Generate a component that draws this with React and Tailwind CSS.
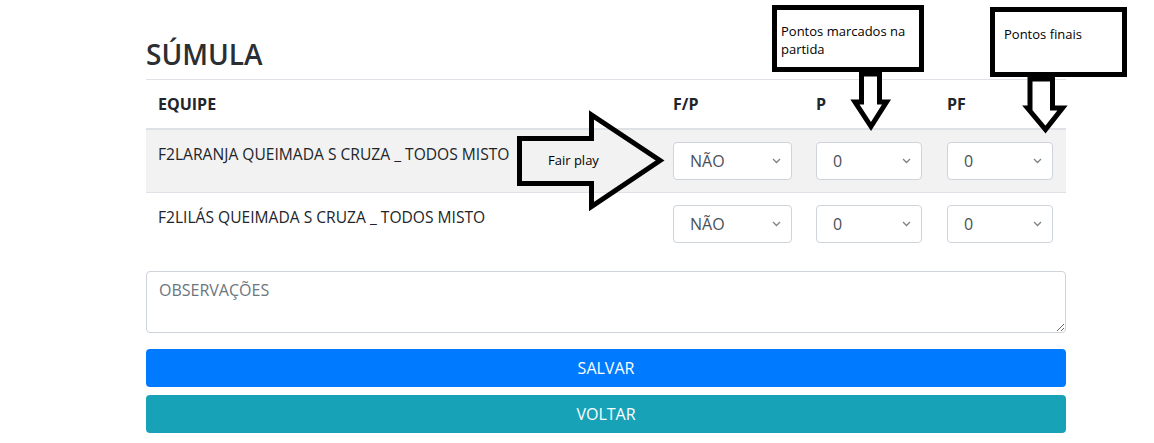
import React from 'react';

const Chevron = () => (
  <svg className="absolute right-[10px] top-1/2 -translate-y-1/2" width="9" height="6" viewBox="0 0 9 6" fill="none">
    <path d="M1 1l3.5 3.5L8 1" stroke="#7b8288" strokeWidth="1.3" />
  </svg>
);

const Select = ({ value, width }) => (
  <div className={`relative h-[38px] ${width} rounded-[4px] border border-[#ced4da] bg-white`}>
    <span className="absolute left-[16px] top-1/2 -translate-y-1/2 text-[16px] leading-6 text-[#495057]">{value}</span>
    <Chevron />
  </div>
);

const rows = [
  { name: 'F2LARANJA QUEIMADA S CRUZA _ TODOS MISTO', striped: true },
  { name: 'F2LILÁS QUEIMADA S CRUZA _ TODOS MISTO', striped: false },
];

const Annotations = () => (
  <div className="pointer-events-none absolute inset-0">
    <svg className="absolute left-0 top-0" width="1154" height="443">
      {/* fair play arrow */}
      <polygon
        points="519.5,138.5 591.5,138.5 591.5,115 660,160.5 591.5,206.5 591.5,183.5 519.5,183.5"
        fill="none"
        stroke="#000"
        strokeWidth="5"
        strokeLinejoin="miter"
      />
      {/* callout boxes */}
      <rect x="774.5" y="7.5" width="147" height="62" fill="#fff" stroke="#000" strokeWidth="5" />
      <rect x="992.5" y="9.5" width="132" height="65" fill="#fff" stroke="#000" strokeWidth="5" />
      {/* down arrows */}
      <polygon
        points="861.5,74 879.5,74 879.5,102 886.5,102 871,126.5 855,102 861.5,102"
        fill="#fff"
        stroke="#000"
        strokeWidth="5"
      />
      <polygon
        points="1030,79 1052.5,79 1052.5,108 1062.5,108 1045.5,129.5 1027.5,108 1030,108"
        fill="#fff"
        stroke="#000"
        strokeWidth="5"
      />
    </svg>
    <span className="absolute left-[548px] top-[151px] text-[13px] leading-[18px] text-black">Fair play</span>
    <span className="absolute left-[781px] top-[22px] w-[138px] text-[13px] leading-[18px] text-black">
      Pontos marcados na partida
    </span>
    <span className="absolute left-[1004px] top-[25px] text-[13px] leading-[18px] text-black">Pontos finais</span>
  </div>
);

export default function App() {
  return (
    <div className="relative h-[443px] w-[1154px] overflow-hidden bg-white font-['Open_Sans',sans-serif] text-[#212529]">
      <div className="ml-[146px] w-[920px] pt-[36px]">
        <h2 className="mb-[7px] text-[28px] font-semibold leading-[36px] text-[#2b2f33]">SÚMULA</h2>

        <div className="mb-[16px]">
          <div className="grid grid-cols-[515px_143px_131px_131px] border-b-2 border-t border-[#dee2e6] text-[16px] font-bold leading-6">
            <div className="p-3">EQUIPE</div>
            <div className="p-3">F/P</div>
            <div className="p-3">P</div>
            <div className="p-3">PF</div>
          </div>
          {rows.map((r, i) => (
            <div
              key={i}
              className={`grid grid-cols-[515px_143px_131px_131px] ${i > 0 ? 'border-t' : ''} border-[#dee2e6] ${r.striped ? 'bg-[#f2f2f2]' : 'bg-white'}`}
            >
              <div className="px-3 py-3 text-[15.6px] leading-6">{r.name}</div>
              <div className="p-3"><Select value="NÃO" width="w-[119px]" /></div>
              <div className="p-3"><Select value="0" width="w-[106px]" /></div>
              <div className="p-3"><Select value="0" width="w-[106px]" /></div>
            </div>
          ))}
        </div>

        <textarea
          rows={2}
          placeholder="OBSERVAÇÕES"
          className="mb-[16px] block h-[62px] w-full rounded-[4px] border border-[#ced4da] px-3 py-[6px] text-[16px] leading-6 text-[#495057] placeholder:text-[#6c757d] focus:outline-none"
        />

        <div className="flex flex-col gap-2">
          <button className="h-[38px] w-full rounded-[4px] bg-[#007bff] text-[16px] leading-6 text-white">SALVAR</button>
          <button className="h-[38px] w-full rounded-[4px] bg-[#17a2b8] text-[16px] leading-6 text-white">VOLTAR</button>
        </div>
      </div>
      <Annotations />
    </div>
  );
}
